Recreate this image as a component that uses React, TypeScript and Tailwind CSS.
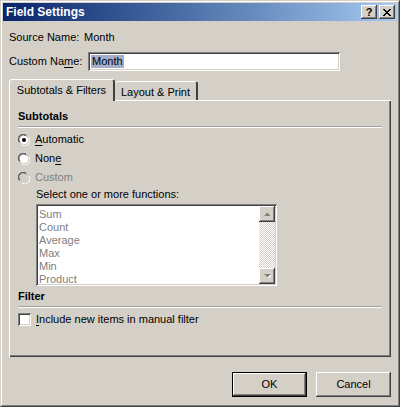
import type { ReactNode } from "react";

const raised =
  "shadow-[inset_-1px_-1px_#404040,inset_1px_1px_#ffffff,inset_-2px_-2px_#808080,inset_2px_2px_#d4d0c8]";
const sunken =
  "shadow-[inset_1px_1px_#808080,inset_-1px_-1px_#ffffff,inset_2px_2px_#404040,inset_-2px_-2px_#d4d0c8]";

const functions = ["Sum", "Count", "Average", "Max", "Min", "Product"];

const Radio = ({ checked, disabled }: { checked?: boolean; disabled?: boolean }) => (
  <svg width="12" height="12" viewBox="0 0 12 12" className="shrink-0">
    <path d="M1 8 A5 5 0 0 1 8 1" stroke="#808080" fill="none" />
    <path d="M2 8.5 A4 4 0 0 1 8.5 2" stroke="#404040" fill="none" />
    <circle cx="6" cy="6" r="4" fill={disabled ? "#d4d0c8" : "#ffffff"} />
    <path d="M11 4 A5 5 0 0 1 4 11" stroke="#ffffff" fill="none" />
    {checked && <circle cx="6" cy="6" r="2" fill="#000000" />}
  </svg>
);

const Arrow = ({ down }: { down?: boolean }) => (
  <div className={`w-[16px] h-[16px] bg-[#d4d0c8] flex items-center justify-center ${raised}`}>
    <svg width="7" height="4" viewBox="0 0 7 4">
      {down ? (
        <>
          <path d="M1 1 H8 L4.5 4.5 Z" fill="#ffffff" />
          <path d="M0 0 H7 L3.5 3.5 Z" fill="#808080" />
        </>
      ) : (
        <>
          <path d="M1 4.5 H8 L4.5 1 Z" fill="#ffffff" />
          <path d="M0 4 H7 L3.5 0.5 Z" fill="#808080" />
        </>
      )}
    </svg>
  </div>
);

const Section = ({ title }: { title: string }) => (
  <>
    <div className="h-[14px] leading-[14px] font-bold">{title}</div>
    <div className="mt-[3px] h-px bg-[#a0a0a0]" />
    <div className="h-px bg-white" />
  </>
);

const Ul = ({ children }: { children: ReactNode }) => <span className="underline underline-offset-2">{children}</span>;

export default function App() {
  return (
    <div className="w-[400px] h-[407px] bg-[#d4d0c8] text-[11px] text-black font-['Liberation_Sans',Arial,sans-serif] border border-t-[#d4d0c8] border-l-[#d4d0c8] border-r-[#404040] border-b-[#404040]">
      <div className="h-full border border-t-white border-l-white border-r-[#808080] border-b-[#808080] p-px flex flex-col">
        {/* title bar */}
        <div className="h-[18px] shrink-0 flex items-center bg-gradient-to-r from-[#0a246a] to-[#a6caf0] pl-[3px] pr-[2px]">
          <span className="font-bold text-white text-[12px] flex-1">Field Settings</span>
          <div className={`w-[16px] h-[14px] bg-[#d4d0c8] flex items-center justify-center font-bold text-[11px] leading-none ${raised}`}>
            ?
          </div>
          <div className={`ml-[2px] w-[16px] h-[14px] bg-[#d4d0c8] flex items-center justify-center ${raised}`}>
            <svg width="8" height="7" viewBox="0 0 8 7">
              <path d="M0 0 L7 7 M1 0 L8 7 M7 0 L0 7 M8 0 L1 7" stroke="#000" strokeWidth="1" />
            </svg>
          </div>
        </div>

        <div className="flex-1 flex flex-col px-[6px]">
          <div className="mt-[9px] h-[14px] leading-[14px] flex">
            <span className="w-[75px]">Source Name:</span>
            <span>Month</span>
          </div>

          <div className="mt-[8px] h-[19px] flex items-center">
            <span className="w-[79px]">
              Custom Na<Ul>m</Ul>e:
            </span>
            <div className={`w-[252px] h-[19px] bg-white flex items-center px-[3px] ${sunken}`}>
              <span className="bg-[#a3aecb] leading-[13px] px-px">Month</span>
            </div>
          </div>

          {/* tab strip */}
          <div className="mt-[8px] h-[21px] flex items-end relative z-10">
            <div className="h-[22px] w-[106px] -mb-px bg-[#d4d0c8] rounded-t-[3px] border-t border-l border-t-white border-l-white border-r-2 border-r-[#404040] flex items-center justify-center pb-[1px]">
              Subtotals &amp; Filters
            </div>
            <div className="h-[19px] w-[83px] bg-[#d4d0c8] rounded-t-[3px] border-t border-t-white border-r-2 border-r-[#404040] flex items-center justify-center pt-[2px]">
              Layout &amp; Print
            </div>
          </div>

          {/* tab panel */}
          <div className="h-[257px] bg-[#d4d0c8] border-t border-l border-t-white border-l-white shadow-[inset_-1px_-1px_#404040,inset_-2px_-2px_#808080] pl-[8px] pr-[9px] pt-[8px]">
            <Section title="Subtotals" />
            <div className="mt-[2px] h-[19px] flex items-center gap-[5px]">
              <Radio checked />
              <span>
                <Ul>A</Ul>utomatic
              </span>
            </div>
            <div className="h-[19px] flex items-center gap-[5px]">
              <Radio />
              <span>
                Non<Ul>e</Ul>
              </span>
            </div>
            <div className="h-[19px] flex items-center gap-[5px]">
              <Radio disabled />
              <span className="text-[#808080]">Custom</span>
            </div>
            <div className="ml-[18px] h-[14px] leading-[14px]">Select one or more functions:</div>
            <div className={`ml-[18px] mt-[3px] w-[241px] h-[82px] bg-white flex p-[2px] ${sunken}`}>
              <div className="flex-1 flex flex-col pl-px pt-[2px]">
                {functions.map((f) => (
                  <div key={f} className="h-[13px] leading-[13px] text-[#808080]">
                    {f}
                  </div>
                ))}
              </div>
              <div className="w-[16px] flex flex-col bg-[repeating-conic-gradient(#ffffff_0_25%,#d4d0c8_0_50%)] bg-[length:2px_2px]">
                <Arrow />
                <div className="flex-1" />
                <Arrow down />
              </div>
            </div>

            <div className="mt-[3px]">
              <Section title="Filter" />
            </div>
            <div className="mt-[4px] h-[14px] flex items-center gap-[5px]">
              <div className={`w-[13px] h-[13px] bg-white ${sunken}`} />
              <span>
                <Ul>I</Ul>nclude new items in manual filter
              </span>
            </div>
          </div>

          <div className="mt-[15px] flex justify-end gap-[9px]">
            <div className="border border-black">
              <div className={`w-[73px] h-[23px] flex items-center justify-center bg-[#d4d0c8] ${raised}`}>OK</div>
            </div>
            <div className={`w-[75px] h-[25px] flex items-center justify-center bg-[#d4d0c8] ${raised}`}>Cancel</div>
          </div>
        </div>
      </div>
    </div>
  );
}
